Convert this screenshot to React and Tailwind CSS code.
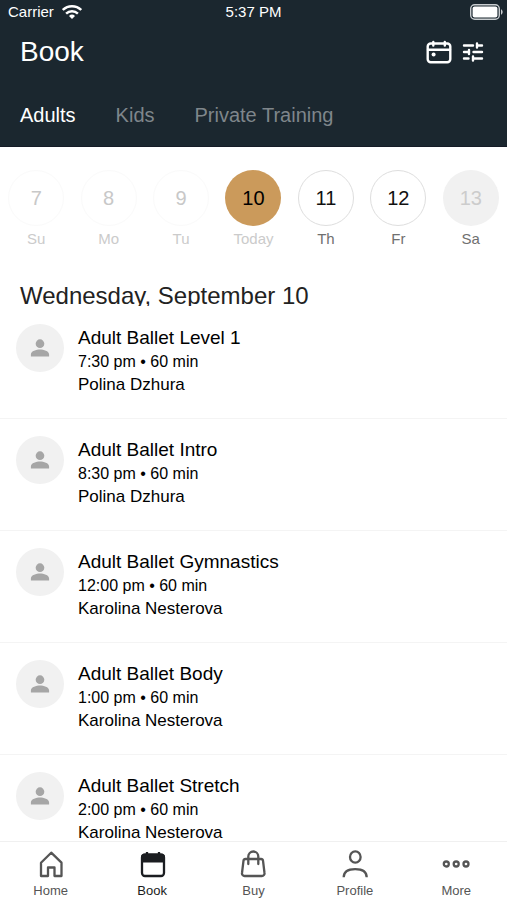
import { useState } from "react";

const TABS = ["Adults", "Kids", "Private Training"];

const DAYS = [
    { date: 7, label: "Su", state: "past" },
    { date: 8, label: "Mo", state: "past" },
    { date: 9, label: "Tu", state: "past" },
    { date: 10, label: "Today", state: "today" },
    { date: 11, label: "Th", state: "open" },
    { date: 12, label: "Fr", state: "open" },
    { date: 13, label: "Sa", state: "closed" },
];

const CLASSES = [
    { title: "Adult Ballet Level 1", time: "7:30 pm", length: "60 min", teacher: "Polina Dzhura" },
    { title: "Adult Ballet Intro", time: "8:30 pm", length: "60 min", teacher: "Polina Dzhura" },
    { title: "Adult Ballet Gymnastics", time: "12:00 pm", length: "60 min", teacher: "Karolina Nesterova" },
    { title: "Adult Ballet Body", time: "1:00 pm", length: "60 min", teacher: "Karolina Nesterova" },
    { title: "Adult Ballet Stretch", time: "2:00 pm", length: "60 min", teacher: "Karolina Nesterova" },
];

const CIRCLE_STYLES = {
    past: "border border-[#fafafa] text-[#c8c8c8]",
    today: "bg-[#cb9a5b] text-black",
    open: "border border-[#dedede] text-[#111111]",
    closed: "bg-[#f1f1f1] text-[#cccccc]",
};

const LABEL_STYLES = {
    past: "text-[#cbcbcb]",
    today: "text-[#cbcbcb]",
    open: "text-[#707070]",
    closed: "text-[#707070]",
};

const WifiIcon = () => (
    <svg width="20" height="14" viewBox="0 0 20 14" fill="none" stroke="currentColor" strokeWidth="2.4">
        <path d="M0.8 5a13.2 13.2 0 0 1 18.4 0"/>
        <path d="M4.1 8.6a8.4 8.4 0 0 1 11.8 0"/>
        <path d="M10 14l-3-3a4.3 4.3 0 0 1 6 0z" fill="currentColor" stroke="none"/>
    </svg>
);

const BatteryIcon = () => (
    <svg width="33" height="16" viewBox="0 0 33 16" fill="none">
        <rect x="0.7" y="0.7" width="28.6" height="14.6" rx="4" stroke="#c9cdd0" strokeWidth="1.4"/>
        <rect x="2.6" y="2.6" width="24.8" height="10.8" rx="2" fill="#fff"/>
        <path d="M31 5.3c2.2 1 2.2 4.4 0 5.4z" fill="#c9cdd0"/>
    </svg>
);

const CalendarIcon = () => (
    <svg width="26" height="24" viewBox="0 0 26 24" fill="none" stroke="currentColor" strokeWidth="2.4" strokeLinecap="round">
        <rect x="1.7" y="3.5" width="22.6" height="18.7" rx="3"/>
        <path d="M2 9.7h22M7.3 2v3.5M18.8 2v3.5"/>
        <circle cx="7.6" cy="14.5" r="2" fill="currentColor" stroke="none"/>
    </svg>
);

const TuneIcon = () => (
    <svg width="22" height="22" viewBox="0 0 22 22" fill="none" stroke="currentColor" strokeWidth="2.4" strokeLinecap="round">
        <path d="M2 4.5h9M15 4.5h5M15 2.5v4"/>
        <path d="M2 11h5M7 9v4M11.5 11H20"/>
        <path d="M2 17.5h4.5M11 17.5h9M11 15.5v4"/>
    </svg>
);

const AvatarIcon = () => (
    <svg width="28" height="28" viewBox="0 0 24 24" fill="currentColor">
        <circle cx="12" cy="8.3" r="3.7"/>
        <path d="M12 13.3c-3 0-7.8 1.3-7.8 4.2v1.8h15.6v-1.8c0-2.9-4.8-4.2-7.8-4.2z"/>
    </svg>
);

const HomeIcon = () => (
    <svg width="28" height="28" viewBox="0 0 28 28" fill="none" stroke="currentColor" strokeWidth="2.3" strokeLinejoin="round">
        <path d="M4 12.7L14.2 2.7 24.5 12.7V26H17.5v-8.5H11V26H4z"/>
    </svg>
);

const BookIcon = () => (
    <svg width="28" height="28" viewBox="0 0 28 28" fill="none" stroke="currentColor" strokeWidth="2.3">
        <rect x="4" y="4.5" width="22" height="21.5" rx="3"/>
        <path d="M3 7a3 3 0 0 1 3-3h18a3 3 0 0 1 3 3v5.5H3z" fill="currentColor" stroke="none"/>
        <path d="M9 2v4M21 2v4"/>
    </svg>
);

const BuyIcon = () => (
    <svg width="28" height="28" viewBox="0 0 28 28" fill="none" stroke="currentColor" strokeWidth="2.3" strokeLinecap="round" strokeLinejoin="round">
        <path d="M6.5 9h15.500a2 2 0 0 1 2 1.700l1.500 12.300a2.600 2.600 0 0 1-2.600 3H5.600a2.600 2.600 0 0 1-2.600-3l1.500-12.300a2 2 0 0 1 2-1.700z"/>
        <path d="M9.3 14V6.500a5 5 0 0 1 10 0V14"/>
    </svg>
);

const ProfileIcon = () => (
    <svg width="28" height="28" viewBox="0 0 28 28" fill="none" stroke="currentColor" strokeWidth="2.3">
        <ellipse cx="14.3" cy="7" rx="5.3" ry="5.7"/>
        <path d="M2.7 27.3c0-5 4-8.2 11.5-8.2s11.5 3.2 11.5 8.2"/>
    </svg>
);

const MoreIcon = () => (
    <svg width="28" height="28" viewBox="0 0 28 28" fill="none" stroke="currentColor" strokeWidth="2.3">
        <circle cx="4.3" cy="14" r="2.5"/>
        <circle cx="14.2" cy="14" r="2.5"/>
        <circle cx="24" cy="14" r="2.5"/>
    </svg>
);

const NAV = [
    { label: "Home", Icon: HomeIcon },
    { label: "Book", Icon: BookIcon },
    { label: "Buy", Icon: BuyIcon },
    { label: "Profile", Icon: ProfileIcon },
    { label: "More", Icon: MoreIcon },
];

const Header = ({ tab, onTab }) => (
    <header className="shrink-0 bg-[#1b272f] text-white border-b border-[#151b26]">
        <div className="grid grid-cols-3 items-center h-6 px-1 text-[15px] leading-6">
            <div className="flex items-center gap-2 pl-1">
                <span>Carrier</span>
                <WifiIcon/>
            </div>
            <span className="text-center">5:37 PM</span>
            <div className="flex justify-end"><BatteryIcon/></div>
        </div>
        <div className="flex items-center justify-between h-14 pl-5 pr-[23px]">
            <h1 className="text-[28px] leading-8">Book</h1>
            <div className="flex items-center gap-[10px]">
                <button aria-label="Calendar"><CalendarIcon/></button>
                <button aria-label="Filters"><TuneIcon/></button>
            </div>
        </div>
        <nav className="flex items-center gap-10 h-[66px] pt-1 px-5">
            {TABS.map(name => (
                <button key={name} onClick={() => onTab(name)}
                    className={`text-[20px] leading-6 ${tab === name ? "text-white" : "text-[#7f868b]"}`}>
                    {name}
                </button>
            ))}
        </nav>
    </header>
);

const ClassRow = ({ item }) => (
    <li className="flex items-start gap-[14px] h-28 px-4 pt-[17px] border-b border-[#f4f4f4]">
        <div className="flex items-center justify-center shrink-0 size-12 rounded-full bg-[#f1f1f1] text-[#a6a6a6]">
            <AvatarIcon/>
        </div>
        <div className="min-w-0 pt-[2px] text-black">
            <h3 className="text-[19px] leading-6">{item.title}</h3>
            <p className="text-[16px] leading-6">{item.time} • {item.length}</p>
            <p className="text-[17px] leading-[22px]">{item.teacher}</p>
        </div>
    </li>
);

export default function App() {
    const [tab, setTab] = useState("Adults");
    const [page, setPage] = useState("Book");

    return (
        <div className="flex flex-col h-screen bg-white font-['Liberation_Sans',Arial,sans-serif]">
            <Header tab={tab} onTab={setTab}/>
            <div className="grid grid-cols-7 shrink-0 pt-[23px]">
                {DAYS.map(day => (
                    <button key={day.date} className="flex flex-col items-center">
                        <span className={`flex items-center justify-center size-14 rounded-full text-[20px] ${CIRCLE_STYLES[day.state]}`}>
                            {day.date}
                        </span>
                        <span className={`pt-1 text-[15px] leading-[18px] ${LABEL_STYLES[day.state]}`}>{day.label}</span>
                    </button>
                ))}
            </div>
            <main className="flex-1 min-h-0 overflow-hidden pt-8">
                <h2 className="h-[26px] overflow-hidden px-5 text-[24px] leading-8 text-[#222222]">Wednesday, September 10</h2>
                <ul className="pt-px">
                    {CLASSES.map(item => <ClassRow key={item.title} item={item}/>)}
                </ul>
            </main>
            <nav className="grid grid-cols-5 shrink-0 h-[59px] pt-2 border-t border-[#f0f0f0] bg-white">
                {NAV.map(({ label, Icon }) => (
                    <button key={label} onClick={() => setPage(label)}
                        className={`flex flex-col items-center gap-1 text-[13px] leading-[18px] ${page === label ? "text-[#1b1d21]" : "text-[#555555]"}`}>
                        <Icon/>
                        {label}
                    </button>
                ))}
            </nav>
        </div>
    );
}
